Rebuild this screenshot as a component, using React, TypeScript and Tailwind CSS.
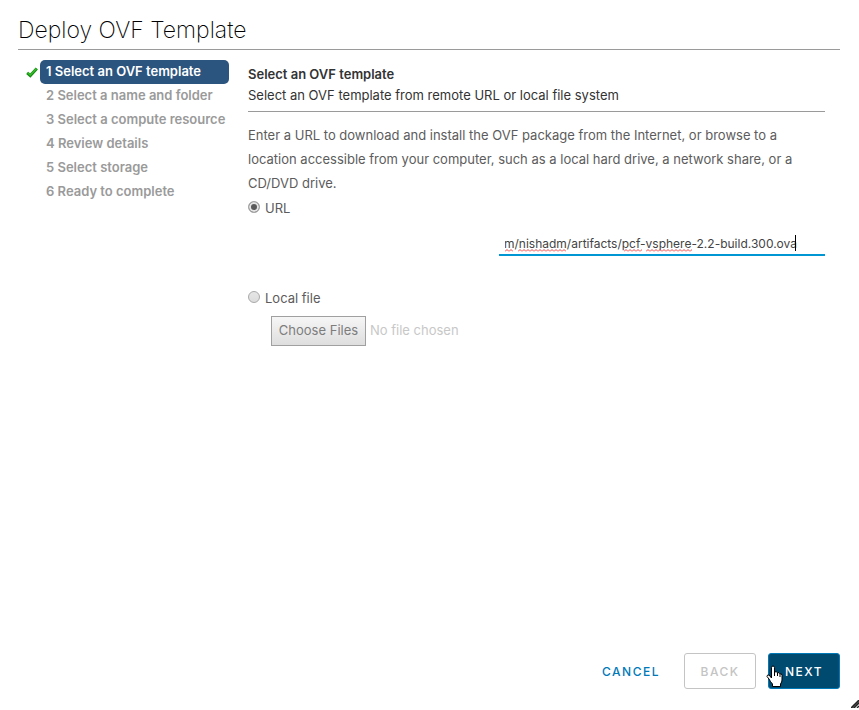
import { useEffect, useRef, useState } from "react";

const steps = [
  "Select an OVF template",
  "Select a name and folder",
  "Select a compute resource",
  "Review details",
  "Select storage",
  "Ready to complete",
];

const radioClass =
  "mb-1 size-3 shrink-0 appearance-none rounded-full border border-[#a9a9a9] bg-linear-to-b from-[#e6e6e6] to-[#dcdcdc] checked:bg-none checked:bg-[#5a5a5a] checked:shadow-[inset_0_0_0_2px_#e4e4e4]";

function CheckIcon() {
  return (
    <svg viewBox="0 0 12 12" className="size-3 shrink-0" aria-hidden="true">
      <path d="M1.2 6.8 4.3 9.6 10.8 2.6" fill="none" stroke="#168a12" strokeWidth="3" />
      <path d="M1.6 6.6 4.3 9 10.5 2.5" fill="none" stroke="#35bd2b" strokeWidth="1.4" />
    </svg>
  );
}

function Squiggle({ className }: { className: string }) {
  return (
    <svg className={"absolute bottom-0.5 h-[3px] " + className} aria-hidden="true">
      <defs>
        <pattern id="wave" width="4" height="3" patternUnits="userSpaceOnUse">
          <path d="M-1 3 0 2.5 2 .5 4 2.5 5 3" fill="none" stroke="#f04040" />
        </pattern>
      </defs>
      <rect width="100%" height="3" fill="url(#wave)" />
    </svg>
  );
}

function HandCursor() {
  return (
    <svg viewBox="0 0 17 22" className="pointer-events-none absolute top-3 -left-0.5 h-[22px] w-[17px]" aria-hidden="true">
      <path
        d="M5.5 13V2.5Q5.5 1 7 1t1.5 1.5V7q2.5-1 2.8.8 2.2-.8 2.5 1 2.2-.5 2.2 1.5V15q0 2-1.5 4v2.5h-8V19Q4.5 17 3 14L1 11.5Q1 9.5 3 10z"
        fill="#fff"
        stroke="#000"
      />
      <path d="M8.5 7v4M11.500 8v3M14 9v3" stroke="#000" fill="none" />
    </svg>
  );
}

export default function App() {
  const urlRef = useRef<HTMLInputElement>(null);
  const [url, setUrl] = useState("m/nishadm/artifacts/pcf-vsphere-2.2-build.300.ova");
  const [source, setSource] = useState("url");

  useEffect(() => {
    if (urlRef.current) urlRef.current.scrollLeft = urlRef.current.scrollWidth;
  }, []);

  return (
    <div className="relative flex min-h-screen flex-col bg-white pr-[19px] pb-[21px] pl-[18px] font-['Inter',sans-serif] text-[13px] text-[#5c5c5c]">
      <header className="border-b border-[#9a9a9a] pt-3 pb-px">
        <h1 className="text-[23px] leading-9 font-extralight text-black">Deploy OVF Template</h1>
      </header>

      <div className="flex flex-1 pt-[10px]">
        <nav aria-label="Wizard steps" className="w-[211px] shrink-0">
          <ol>
            {steps.map((step, i) => (
              <li key={step} className="flex h-6 items-center gap-[2px] pl-2">
                <span className="w-3 shrink-0">{i === 0 && <CheckIcon />}</span>
                <a
                  href={"#step-" + (i + 1)}
                  aria-current={i === 0 ? "step" : undefined}
                  className={
                    i === 0
                      ? "flex-1 rounded-[5px] bg-[#2b547e] pb-0.5 pl-1.5 leading-[22px] font-semibold whitespace-nowrap text-white"
                      : "flex-1 pb-0.5 pl-1.5 leading-[22px] font-semibold whitespace-nowrap text-[#9a9a9a]"
                  }
                >
                  {i + 1} {step}
                </a>
              </li>
            ))}
          </ol>
        </nav>

        <main className="min-w-0 flex-1 pt-1 pr-[15px] pl-[19px]">
          <div className="border-b border-[#9a9a9a] pb-[5px] text-[#333]">
            <h2 className="leading-[21px] font-semibold">Select an OVF template</h2>
            <p className="leading-[21px]">Select an OVF template from remote URL or local file system</p>
          </div>
          <p className="pt-[11px] leading-6">
            Enter a URL to download and install the OVF package from the Internet, or browse to a location accessible
            from your computer, such as a local hard drive, a network share, or a CD/DVD drive.
          </p>

          <label className="mt-0.5 flex h-6 items-center gap-[5px]">
            <input type="radio" name="source" className={radioClass} checked={source === "url"} onChange={() => setSource("url")} />
            URL
          </label>
          <div className="relative mt-[11px] ml-auto w-[326px] border-b-2 border-[#0095d3]">
            <input
              ref={urlRef}
              type="text"
              aria-label="URL"
              spellCheck={false}
              value={url}
              onChange={(e) => setUrl(e.target.value)}
              className="mr-7 ml-1.5 block h-[22px] w-[292px] bg-transparent text-xs text-[#444] outline-none"
            />
            <Squiggle className="left-1.5 w-2" />
            <Squiggle className="left-[19px] w-12" />
            <Squiggle className="left-[125px] w-[18px]" />
            <Squiggle className="left-[147px] w-[46px]" />
            <span className="absolute top-[3px] left-[296px] h-4 w-px bg-black" />
          </div>

          <label className="mt-[31px] flex h-6 items-center gap-[5px]">
            <input type="radio" name="source" className={radioClass} checked={source === "file"} onChange={() => setSource("file")} />
            Local file
          </label>
          <input
            type="file"
            multiple
            disabled
            aria-label="Local file"
            className="mt-[5px] ml-[23px] block h-[30px] text-[#c8c8c8] file:mr-1 file:h-[30px] file:w-[95px] file:border file:border-solid file:border-[#a0a0a0] file:bg-linear-to-b file:from-[#f6f6f6] file:to-[#dedede] file:p-0 file:text-[13px] file:text-[#7d7d7d]"
          />
        </main>
      </div>

      <footer className="flex justify-end gap-3 text-xs tracking-[1.5px]">
        <button type="button" className="h-9 px-3 pt-0.5 font-medium text-[#0079b8]">CANCEL</button>
        <button type="button" disabled className="h-9 w-[72px] rounded-[3px] border border-[#c4c4c4] pt-0.5 font-medium text-[#c4c4c4]">BACK</button>
        <div className="relative">
          <button type="button" className="h-9 w-[72px] rounded-[3px] border border-[#0079b8] bg-[#004a70] pt-0.5 font-medium text-white">NEXT</button>
          <HandCursor />
        </div>
      </footer>

      <svg viewBox="0 0 8 8" className="absolute right-0 bottom-0.5 size-2" aria-hidden="true">
        <path d="M0 8 8 0V3L3 8z" fill="#555" />
        <path d="M0 8 8 0M3 8 8 3M6 8 8 6" stroke="#222" strokeWidth="1.4" />
      </svg>
    </div>
  );
}
